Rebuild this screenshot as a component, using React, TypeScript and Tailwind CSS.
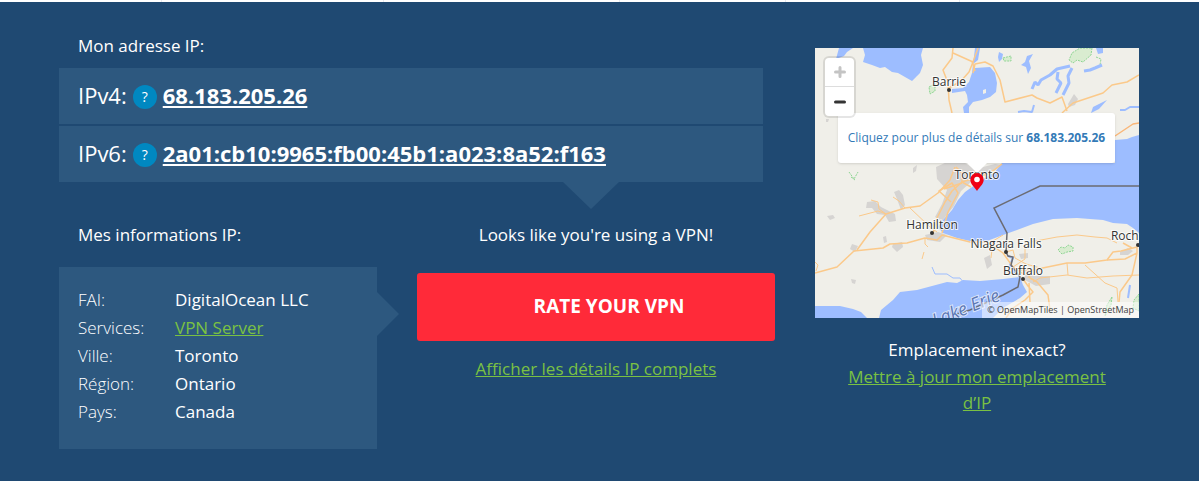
import type { ReactNode } from "react";

const details = [
  { label: "FAI:", value: "DigitalOcean LLC" },
  { label: "Services:", value: "VPN Server", href: "#vpn" },
  { label: "Ville:", value: "Toronto" },
  { label: "Région:", value: "Ontario" },
  { label: "Pays:", value: "Canada" },
];

const places = [
  { name: "Barrie", x: 134, y: 38, dot: [134, 42] },
  { name: "Toronto", x: 162, y: 131 },
  { name: "Hamilton", x: 117, y: 181, dot: [117, 185] },
  { name: "Niagara Falls", x: 191, y: 200, dot: [191, 204] },
  { name: "Buffalo", x: 208, y: 227, dot: [208, 231] },
  { name: "Rochester", x: 324, y: 192, dot: [323, 197] },
];

function AddressRow({ label, children }: { label: string; children: ReactNode }) {
  return (
    <div className="flex items-end bg-[#2d587f] px-[19px] pb-[13px] pt-[11px] text-[22px] leading-8">
      <span>{label}</span>
      <button
        type="button"
        aria-label={`Aide ${label}`}
        className="mx-1.5 mb-0.5 h-6 w-6 rounded-full bg-[#0088c1] text-sm leading-6"
      >
        ?
      </button>
      <a href="#ip" className="font-bold underline decoration-2 underline-offset-2">
        {children}
      </a>
    </div>
  );
}

function MapDrawing() {
  return (
    <svg viewBox="0 0 324 270" preserveAspectRatio="xMidYMid slice" className="block h-full w-full">
      <rect width="324" height="270" fill="#f0efe9" />

      {/* Parks */}
      <g fill="#d9ecd0" stroke="#8fd694" strokeDasharray="2 1">
        <path d="M265 0H277L276 7 268 14 262 12 258 15 254 12 257 5Z" />
        <path d="M243 202L246 199 250 200 253 197 258 199 258 203 252 204 247 206Z" />
        <path d="M34 124L39 131 43 124M36 129L40 132" fill="none" />
        <path d="M114 39L120 36 120 43 115 46Z" />
        <path d="M188 10L196 8 196 13 189 13Z" />
        <path d="M281 9L286 11 285 17" fill="none" />
        <path d="M297 249L292 257 290 268 296 257Z" />
        <path d="M324 246L319 252 318 260 324 263Z" />
      </g>

      {/* Built-up areas */}
      <g fill="#d6d4d2">
        <path d="M121 119L132 114 150 115 160 121 180 116 188 117 176 125 157 133 146 143 139 158 127 173 120 169 127 156 132 142 122 131Z" />
        <path d="M52 154L60 153 66 159 80 166 81 173 74 174 70 167 62 166 57 160 51 160Z" />
        <path d="M79 144L84 142 88 147 90 157 86 162 82 151Z" />
        <path d="M110 187L123 184 132 187 125 194 112 192Z" />
        <path d="M78 196L87 194 88 199 82 204 77 199Z" />
        <path d="M169 210L175 207 177 217 172 221Z" />
        <path d="M209 219L220 228 235 228 235 236 221 238 210 232Z" />
        <path d="M305 204L313 200 318 203 313 207 305 207Z" />
        <path d="M204 206L213 205 213 210 206 211Z" />
        <path d="M253 56L259 46 263 51 260 57 254 59Z" />
        <path d="M37 196L43 198 40 204 35 201Z" />
        <path d="M12 168L18 167 20 170 15 172Z" />
        <path d="M36 231L41 232 40 236 37 235Z" />
        <path d="M68 189L71 188 72 194 69 195Z" />
        <path d="M98 120L102 117 101 123 98 125Z" />
        <path d="M11 71L14 71 13 74 11 74Z" />
      </g>

      {/* Lakes */}
      <g fill="#9dbdff">
        <path d="M24 0H38L32 4 29 8 21 11Z" />
        <path d="M48 0L50 7 48 14 57 17 65 20 70 19 77 24 83 25 90 29 97 33 102 28 105 25 108 17 106 7 108 0Z" />
        <path d="M160 0H165L163 12 158 16 160 20 175 19 180 25 182 35 181 44 175 49 167 52 158 54 154 59 154 65H149L148 59 153 54 152 47 150 43 137 45 137 41 148 40 154 34 157 25Z" />
        <path d="M168 42L171 41 171 45 168 46Z" fill="#f0efe9" />
        <path d="M187 115H300V92L312 91 317 89 324 87V185L318 180 312 176 298 175 288 172 262 170 238 171 218 176 202 182 188 187 172 193 155 193 142 190 128 185 123 179 128 172 137 162 143 152 150 144 157 139 170 130 180 124Z" />
        <path d="M0 258H25L38 261 46 264 52 270H0Z" />
        <path d="M64 270L66 262 78 252 85 244 102 242 132 234 142 235 148 232 165 233 188 231 205 229 208 237 212 244 205 250 188 260 178 270Z" />
        <path d="M184 4L188 6 187 11 184 14 183 9Z" />
        <path d="M212 8L218 6 214 13 216 20 213 26 211 19 206 17 210 14Z" />
        <path d="M281 0H288V5L283 6Z" />
        <path d="M292 52L284 61 276 65 278 59Z" />
      </g>
      <g fill="none" stroke="#9dbdff" strokeWidth="3" strokeLinejoin="bevel">
        <path d="M217 41L220 34 223 37 226 32 235 27 242 21 255 18" />
        <path d="M243 24L242 31 246 35 241 45" />
        <path d="M257 20L253 28 254 35 248 47" />
        <path d="M269 23L275 22 280 20 287 17" />
        <path d="M203 64L209 63 217 64 219 57" strokeWidth="2" />
        <path d="M305 62L310 62 315 59 324 59" strokeWidth="2" />
        <path d="M117 219L120 226 132 226 138 230 145 230 149 235" strokeWidth="1" />
        <path d="M315 237L313 250" strokeWidth="2" />
        <path d="M193 208L198 210 195 217 200 225" strokeWidth="2" />
      </g>

      {/* Roads */}
      <g fill="none" stroke="#fbc98a" strokeWidth="1.5" strokeLinejoin="round">
        <path d="M138 0L137 10 128 22 133 35 134 52 137 65" />
        <path d="M138 5L158 14 154 24 146 33 134 40M158 25L160 16 170 14 178 18 185 32 190 54 217 47 222 50 235 55 247 49 252 63" />
        <path d="M158 14L163 0M160 23L157 13" />
        <path d="M247 65L258 55 288 45 297 37 312 34 324 27" />
        <path d="M300 88L318 76 324 75" stroke="#f9b678" />
        <path d="M0 225L22 219 39 203 68 200 75 196 92 195 110 190 122 192 127 187 155 194 172 194 188 205 198 219 210 227" />
        <path d="M42 202L55 184 71 166 90 160 105 158 123 145 135 132 140 119" />
        <path d="M44 168L63 163 71 166M56 152L63 154 64 161 71 166M78 149L84 153 90 160M95 160L115 179 122 184" strokeWidth="1" />
        <path d="M118 186L122 170 130 154 137 143 147 134 160 130 175 125 187 116" />
        <path d="M127 185L133 164 143 145 137 135 124 143 136 154M129 141L147 135M141 119L147 125 147 135M147 134L156 139" />
        <path d="M110 190L110 196 113 199M109 204L107 211M0 214L3 217 1 223" strokeWidth="1" />
        <path d="M188 187L178 193 176 210M191 204L198 202 200 210 211 216 225 220M210 195V211L198 219M210 195L242 189 262 187 280 189 292 190 302 195" strokeWidth="1" />
        <path d="M205 222L218 222 252 215 270 215 292 212 298 204 306 203 322 199" />
        <path d="M213 230L218 222M218 234L225 230 252 227 272 230 298 228 324 227M252 215L253 227M270 217L290 235 302 240 303 254" strokeWidth="1" />
        <path d="M322 199V205L317 227 305 244 304 254M317 200L308 195M292 212L310 211 322 205" />
        <path d="M208 231L213 238 218 244 210 252 198 260 191 270M211 220L215 230 222 234 233 247 235 262M214 235L215 254" />
      </g>

      {/* National border */}
      <path
        d="M324 138H225L179 160 192 185 191 204 193 208 198 209 196 217 205 229 203 239 188 247 155 262 138 267"
        fill="none"
        stroke="#6b6b72"
        strokeWidth="1.5"
      />

      <text
        transform="translate(120 279) rotate(-22)"
        className="fill-[#5d78b5] stroke-[#dce6fb] text-[18px] italic [paint-order:stroke]"
        strokeWidth="2"
      >
        Lake Erie
      </text>
      {places.map(({ name, x, y, dot }) => (
        <g key={name} fill="#333">
          {dot && <circle cx={dot[0]} cy={dot[1]} r="2" />}
          <text
            x={x}
            y={y}
            textAnchor="middle"
            stroke="#fff"
            strokeOpacity="0.8"
            strokeWidth="2"
            className="text-[12px] font-medium [paint-order:stroke]"
          >
            {name}
          </text>
        </g>
      ))}
    </svg>
  );
}

function LocationMap() {
  return (
    <div className="relative h-[270px] overflow-hidden text-xs">
      <MapDrawing />

      <a
        href="#details"
        className="absolute left-[23px] right-6 top-[65px] flex h-[50px] items-center justify-center whitespace-nowrap rounded-[3px] bg-white text-[#337ab7] shadow-sm"
      >
        <span>
          Cliquez pour plus de détails sur <b>68.183.205.26</b>
        </span>
        <span className="absolute left-1/2 top-full -translate-x-1/2 border-x-10 border-t-10 border-x-transparent border-t-white" />
      </a>

      <svg viewBox="0 0 14 18" className="absolute left-1/2 top-[125px] h-[18px] w-[14px] -translate-x-1/2">
        <path d="M7 0a6.7 6.7 0 0 0-6.7 6.7C.3 11 4.5 14 7 18c2.5-4 6.7-7 6.7-11.3A6.7 6.7 0 0 0 7 0Z" fill="#f00014" />
        <circle cx="7" cy="6.5" r="2.8" fill="#fff" />
      </svg>

      <div className="absolute left-2 top-2 flex flex-col divide-y divide-[#ddd] rounded-md border-2 border-black/10 bg-white bg-clip-padding">
        <button type="button" aria-label="Zoom avant" className="flex h-[29px] w-[29px] items-center justify-center">
          <svg viewBox="0 0 12 12" className="h-3 w-3" stroke="#c4c4c4" strokeWidth="3" strokeLinecap="round">
            <path d="M6 1.5V10.5M1.5 6H10.5" />
          </svg>
        </button>
        <button type="button" aria-label="Zoom arrière" className="flex h-[29px] w-[29px] items-center justify-center">
          <svg viewBox="0 0 12 12" className="h-3 w-3" stroke="#333" strokeWidth="3" strokeLinecap="round">
            <path d="M1.5 6H10.5" />
          </svg>
        </button>
      </div>

      <div className="absolute bottom-0 right-0 bg-white/50 px-[5px] text-[9px] leading-4 text-[#404040]">
        © <a href="#tiles">OpenMapTiles</a> | <a href="#osm">OpenStreetMap</a>
      </div>
    </div>
  );
}

export default function App() {
  return (
    <div className="bg-white pb-px font-['Open_Sans',sans-serif] text-[17px] text-white">
      {/* Bottom edge of the tab bar */}
      <div className="grid h-0.5 grid-cols-[162px_222px_236px_166px_174px_1fr] divide-x divide-[#e7eaf0]">
        <span />
        <span />
        <span />
        <span />
        <span />
        <span />
      </div>

      <main className="flex gap-10 bg-[#1f4972] pb-8 pl-[59px] pr-15 pt-8">
        <section className="min-w-0 flex-1">
          <h2 className="px-[19px] pb-2.5 font-medium leading-6">Mon adresse IP:</h2>
          <div className="relative mr-3 flex flex-col gap-0.5">
            <AddressRow label="IPv4:">68.183.205.26</AddressRow>
            <AddressRow label="IPv6:">2a01:cb10:9965:fb00:45b1:a023:8a52:f163</AddressRow>
            <span className="absolute right-36 top-full border-x-28 border-t-27 border-x-transparent border-t-[#2d587f]" />
          </div>

          <div className="mt-[41px] flex gap-10">
            <div className="w-[318px]">
              <h2 className="px-[19px] pb-5 font-medium leading-6">Mes informations IP:</h2>
              <div className="relative bg-[#2d587f] px-[19px] pb-[23px] pt-[19px]">
                <dl className="grid grid-cols-[97px_1fr] leading-7">
                  {details.map(({ label, value, href }) => (
                    <div key={label} className="contents">
                      <dt className="font-light">{label}</dt>
                      <dd className="font-medium">
                        {href ? (
                          <a href={href} className="font-normal text-[#7ac143] underline">
                            {value}
                          </a>
                        ) : (
                          value
                        )}
                      </dd>
                    </div>
                  ))}
                </dl>
                <span className="absolute left-full top-[25px] border-y-22 border-l-22 border-y-transparent border-l-[#2d587f]" />
              </div>
            </div>

            <div className="flex-1 text-center">
              <p className="leading-6">Looks like you're using a VPN!</p>
              <button
                type="button"
                className="mt-[26px] h-[68px] w-full rounded-[3px] bg-[#ff2a39] pb-0.5 pl-[26px] text-[19px] font-bold"
              >
                RATE YOUR VPN
              </button>
              <a href="#full" className="mt-4 inline-block leading-6 text-[#7ac143] underline">
                Afficher les détails IP complets
              </a>
            </div>
          </div>
        </section>

        <aside className="w-[324px] pt-3.5 text-center">
          <LocationMap />
          <p className="pt-[18px] leading-7">Emplacement inexact?</p>
          <p className="px-5 leading-[26px]">
            <a href="#update" className="text-[#7ac143] underline">
              Mettre à jour mon emplacement d’IP
            </a>
          </p>
        </aside>
      </main>
    </div>
  );
}
